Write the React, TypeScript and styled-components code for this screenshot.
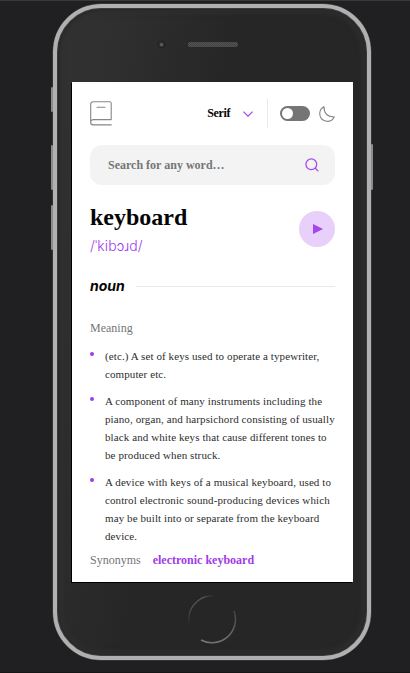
import React from "react";
import styled, { createGlobalStyle } from "styled-components";

const GlobalStyle = createGlobalStyle`
  * { box-sizing: border-box; }
  body { margin: 0; background: #202022; }
  h1, h2, h3, p, ul { margin: 0; padding: 0; }
`;

const Stage = styled.div`
  width: 410px;
  height: 673px;
  padding: 3px 0 0 53px;
  border-top: 1px solid #38383a;
  border-bottom: 1px solid #161617;
  background: #202022;
  overflow: hidden;
  font-family: "Liberation Serif", "Times New Roman", serif;
`;

const Phone = styled.div`
  position: relative;
  width: 318px;
  height: 656px;
  border: 4px solid #b0b0b0;
  border-radius: 48px;
  padding: 0 14px 0 15px;
  background: linear-gradient(100deg, #323232 0%, #2e2e2e 18%, #262626 42%, #262626 100%);
  box-shadow: 0 0 0 0.5px #484848, inset 0 0 0 1px #3c3c3c, inset 0 0 2px 2px #272727,
    inset 0 0 5px 5px #2f2f2f;
`;

const SideButton = styled.i<{ $side: "left" | "right"; $top: number; $height: number }>`
  position: absolute;
  ${(p) => p.$side}: -6px;
  top: ${(p) => p.$top}px;
  width: 2px;
  height: ${(p) => p.$height}px;
  background: #8b8b8b;
  border-radius: 1px;
`;

const TopBezel = styled.div`
  display: flex;
  align-items: flex-start;
  height: 74px;
  padding: 34px 0 0 87px;
`;

const Camera = styled.div`
  width: 5px;
  height: 5px;
  margin-right: 24px;
  border-radius: 50%;
  background: radial-gradient(circle at 50% 55%, #5c5c62 0 1px, #34343a 2px);
  box-shadow: 0 0 1px 1px #202024;
`;

const Speaker = styled.div`
  width: 50px;
  height: 5px;
  border-radius: 2px;
  background: repeating-conic-gradient(#555 0 25%, #404040 0 50%) 0 0 / 2px 2px;
`;

const Screen = styled.main`
  width: 281px;
  height: 500px;
  padding: 17px 18px 0;
  background: #fff;
  box-shadow: -1px 1px 0 #000;
  overflow: hidden;
`;

const BottomBezel = styled.div`
  display: flex;
  justify-content: center;
  padding: 12px 2px 0 0;
  svg { display: block; }
`;

const Header = styled.header`
  display: flex;
  align-items: center;
  height: 29px;
  svg { display: block; flex: none; }
`;

const FontPicker = styled.button`
  display: flex;
  align-items: center;
  gap: 13px;
  margin-left: auto;
  padding: 0 14px 0 0;
  height: 29px;
  border: 0;
  border-right: 1px solid #e9e9e9;
  background: none;
  color: #050505;
  font: bold 12px "Liberation Serif", serif;
  letter-spacing: -0.4px;
`;

const Toggle = styled.span`
  width: 30px;
  height: 15px;
  margin: 0 9px 0 12px;
  padding: 2px;
  border-radius: 8px;
  background: #757575;
  &::before {
    content: "";
    display: block;
    width: 11px;
    height: 11px;
    border-radius: 50%;
    background: #fff;
  }
`;

const SearchBar = styled.div`
  display: flex;
  align-items: center;
  justify-content: space-between;
  height: 40px;
  margin-top: 17px;
  padding: 0 16px 0 18px;
  border-radius: 12px;
  background: #f3f3f3;
  color: #757575;
  font-weight: bold;
  font-size: 12px;
`;

const WordRow = styled.section`
  display: flex;
  justify-content: space-between;
  align-items: center;
  height: 50px;
  margin-top: 19px;
`;

const Word = styled.h1`
  color: #050505;
  font-size: 24px;
  line-height: 27px;
`;

const Phonetic = styled.p`
  margin-top: 6px;
  color: #a03be8;
  font: 300 14px/18px Inter, sans-serif;
  letter-spacing: 0.1px;
`;

const PlayButton = styled.button`
  display: grid;
  place-items: center;
  width: 36px;
  height: 36px;
  padding: 0 0 0 2px;
  border: 0;
  border-radius: 50%;
  background: #e8d0fa;
`;

const PartOfSpeech = styled.h2`
  display: flex;
  align-items: center;
  gap: 11px;
  height: 20px;
  margin-top: 22px;
  color: #050505;
  font: italic bold 14px/20px Inter, sans-serif;
  &::after {
    content: "";
    flex: 1;
    height: 1px;
    background: #e9e9e9;
  }
`;

const Label = styled.h3`
  color: #757575;
  font-size: 12px;
  line-height: 16px;
  font-weight: normal;
`;

const MeaningSection = styled.section`
  margin-top: 24px;
`;

const Meanings = styled.ul`
  display: grid;
  gap: 9px;
  margin-top: 11px;
  list-style: none;
`;

const Meaning = styled.li`
  display: flex;
  color: #2d2d2d;
  font-size: 11px;
  line-height: 18px;
  letter-spacing: 0.1px;
  white-space: nowrap;
  &::before {
    content: "";
    width: 4px;
    height: 4px;
    margin: 5px 11px 0 0;
    border-radius: 50%;
    background: #a03be8;
  }
`;

const Line = styled.span`
  display: block;
`;

const Synonyms = styled.div`
  display: flex;
  gap: 12px;
  margin-top: 7px;
`;

const Synonym = styled.strong`
  color: #a03be8;
  font-size: 12px;
  line-height: 16px;
`;

const definitions = [
  ["(etc.) A set of keys used to operate a typewriter,", "computer etc."],
  [
    "A component of many instruments including the",
    "piano, organ, and harpsichord consisting of usually",
    "black and white keys that cause different tones to",
    "be produced when struck.",
  ],
  [
    "A device with keys of a musical keyboard, used to",
    "control electronic sound-producing devices which",
    "may be built into or separate from the keyboard",
    "device.",
  ],
];

const BookIcon = () => (
  <svg width="22" height="25" viewBox="0 0 22 25" fill="none" stroke="#878787" strokeWidth="1.1" strokeLinecap="round">
    <path d="M21.2 18.5V2.2Q21.2.7 19.7.7H3.3Q.7.7.7 3.3V21.5M21.2 18.6H3.3a2.65 2.65 0 0 0 0 5.3H21.2M7 6.3h8" />
  </svg>
);

const ChevronIcon = () => (
  <svg width="10" height="6" viewBox="0 0 10 6" fill="none" stroke="#a445ed" strokeWidth="1.2">
    <path d="m.4.6 4.6 4.5L9.6.6" />
  </svg>
);

const MoonIcon = () => (
  <svg width="16" height="16" viewBox="0 0 22 22" fill="none" stroke="#838383" strokeWidth="1.5" strokeLinejoin="round">
    <path d="M1 10.449a10.544 10.544 0 0 0 19.993 4.686C11.544 15.135 6.858 10.448 6.858 1A10.545 10.545 0 0 0 1 10.449Z" />
  </svg>
);

const SearchIcon = () => (
  <svg width="14" height="14" viewBox="0 0 14 14" fill="none" stroke="#a445ed" strokeWidth="1.25" strokeLinecap="round">
    <circle cx="6.3" cy="6.3" r="5.4" />
    <path d="m10.3 10.3 2.7 2.6" />
  </svg>
);

const PlayIcon = () => (
  <svg width="10" height="10" viewBox="0 0 10 10">
    <path d="M0 0v10l10-5Z" fill="#a445ed" />
  </svg>
);

const HomeButton = () => (
  <svg width="50" height="50" viewBox="0 0 50 50" fill="none">
    <defs>
      <linearGradient id="arcTop" x1="0" y1="1" x2="1" y2="0">
        <stop offset="0" stopColor="#555" stopOpacity="0" />
        <stop offset=".35" stopColor="#555" />
        <stop offset=".75" stopColor="#555" />
        <stop offset="1" stopColor="#555" stopOpacity="0" />
      </linearGradient>
      <linearGradient id="arcBottom" x1="0" y1="1" x2="1" y2="0">
        <stop offset="0" stopColor="#777" />
        <stop offset=".5" stopColor="#6a6a6a" />
        <stop offset="1" stopColor="#444" />
      </linearGradient>
    </defs>
    <path d="M2.5 31A23.5 23.5 0 0 1 28 2" stroke="url(#arcTop)" strokeWidth="1.3" />
    <path d="M47 17A23.5 23.5 0 0 1 14 46" stroke="url(#arcBottom)" strokeWidth="1.5" />
  </svg>
);

export default function App() {
  return (
    <>
      <GlobalStyle />
      <Stage>
        <Phone>
          <SideButton $side="left" $top={79} $height={25} />
          <SideButton $side="left" $top={137} $height={45} />
          <SideButton $side="left" $top={197} $height={45} />
          <SideButton $side="right" $top={136} $height={46} />
          <TopBezel>
            <Camera />
            <Speaker />
          </TopBezel>
          <Screen>
            <Header>
              <BookIcon />
              <FontPicker>
                Serif
                <ChevronIcon />
              </FontPicker>
              <Toggle />
              <MoonIcon />
            </Header>
            <SearchBar>
              Search for any word…
              <SearchIcon />
            </SearchBar>
            <WordRow>
              <div>
                <Word>keyboard</Word>
                <Phonetic>/ˈkibɔɹd/</Phonetic>
              </div>
              <PlayButton aria-label="Play">
                <PlayIcon />
              </PlayButton>
            </WordRow>
            <PartOfSpeech>noun</PartOfSpeech>
            <MeaningSection>
              <Label>Meaning</Label>
              <Meanings>
                {definitions.map((lines) => (
                  <Meaning key={lines[0]}>
                    <div>
                      {lines.map((line) => (
                        <Line key={line}>{line}</Line>
                      ))}
                    </div>
                  </Meaning>
                ))}
              </Meanings>
            </MeaningSection>
            <Synonyms>
              <Label>Synonyms</Label>
              <Synonym>electronic keyboard</Synonym>
            </Synonyms>
          </Screen>
          <BottomBezel>
            <HomeButton />
          </BottomBezel>
        </Phone>
      </Stage>
    </>
  );
}
